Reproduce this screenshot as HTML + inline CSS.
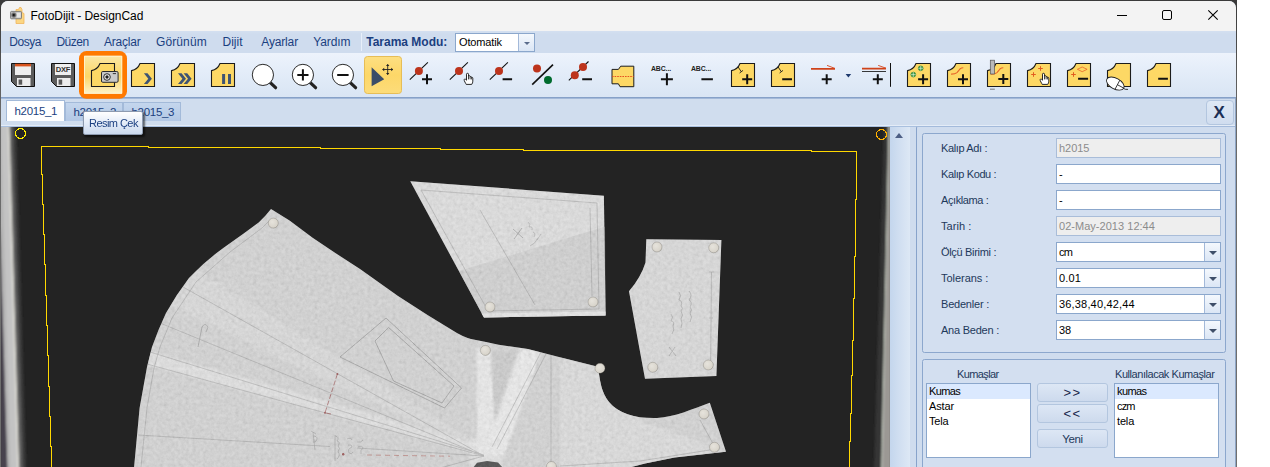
<!DOCTYPE html>
<html lang="tr">
<head>
<meta charset="utf-8">
<title>FotoDijit - DesignCad</title>
<style>
html,body{margin:0;padding:0;}
body{width:1270px;height:467px;overflow:hidden;background:#fff;position:relative;font-family:"Liberation Sans",sans-serif;font-size:12px;color:#1e395b;}
.abs{position:absolute;}
#frame{position:absolute;left:0;top:0;width:1237px;height:480px;background:linear-gradient(#3a3a3a 0,#444 30px,#6a6a6a 110px,#707070 100%);}
#win{position:absolute;left:1px;top:1px;width:1235px;height:480px;background:#cfdcee;border-radius:7px 7px 0 0;overflow:hidden;}
#title{position:absolute;left:0;top:0;width:1235px;height:30px;background:#f3f3f3;}
#title .t{position:absolute;left:29.5px;top:8px;font-size:12px;line-height:15px;color:#000;white-space:pre;letter-spacing:-0.06px;}
#menu{position:absolute;left:0;top:30px;width:1235px;height:22px;background:linear-gradient(#d4e0f0 0,#cfdcee 3px,#cfdcee 100%);}
#menu>span{position:absolute;top:4px;line-height:15px;font-size:12px;white-space:pre;color:#1b3f80;}
#tool{z-index:2;position:absolute;left:0;top:52px;width:1235px;height:45px;background:linear-gradient(#edf3fc 0,#e4edf9 40%,#d9e5f4 100%);border-bottom:1px solid #86a1c8;box-sizing:border-box;}
#tabs{position:absolute;left:0;top:97px;width:1235px;height:29px;background:#d0ddee;box-sizing:border-box;border-bottom:1px solid #a9c0df;border-top:1px solid #a3b9d9;box-shadow:inset 0 -1px 0 #e4ecf7;}
.tab{position:absolute;box-sizing:border-box;border:1px solid #a3bad9;border-bottom:none;font-size:11.5px;letter-spacing:-0.3px;line-height:15px;color:#1b3f80;white-space:pre;}
.tab span{position:absolute;}
#panel{position:absolute;left:915px;top:125px;width:320px;height:360px;background:#cfdcee;border-left:1px solid #88a3cb;border-top:1px solid #a3badb;border-top-left-radius:2px;box-sizing:border-box;}
.gb{position:absolute;box-sizing:border-box;border:1px solid #8ca7cd;border-radius:2.5px;background:#d3dff0;}
.lbl{position:absolute;font-size:11px;line-height:14px;color:#1e395b;white-space:pre;}
.inp{position:absolute;box-sizing:border-box;border:1px solid #8ba7cc;background:#fff;height:20px;font-size:11px;line-height:18px;color:#000;white-space:pre;padding-left:2px;}
.inp.dis{background:#eeeeee;color:#8c8c8c;border-color:#a9bdd9;}
.dd{position:absolute;right:0;top:0;width:15px;height:18px;border-left:1px solid #a3b9d9;background:linear-gradient(#f4f8fd,#dbe6f5);}
.dd:after{content:"";position:absolute;left:3.5px;top:7.5px;border:4px solid transparent;border-top:4.5px solid #3f4f69;border-bottom:none;}
.ddm:after{left:4.5px;top:7.5px;border-width:3.3px;border-top:3.6px solid #5a6c8c;}
.btn{position:absolute;box-sizing:border-box;border:1px solid #b3c6df;border-radius:3px;background:linear-gradient(#dde7f5,#cddaed);font-size:12px;line-height:17px;color:#1e395b;text-align:center;white-space:pre;}
.lb{position:absolute;box-sizing:border-box;border:1px solid #8ba7cc;background:#fff;font-size:11px;color:#000;}
.lb div{height:15px;line-height:15px;padding-left:2px;white-space:pre;}
.lb div.sel{background:#dbe9fe;}
</style>
</head>
<body>
<div id="frame"></div>
<div id="win">
  <div id="title">
    <svg class="abs" style="left:8px;top:5px" width="18" height="20" viewBox="0 0 18 20">
      <path d="M7 3.5 L9.5 3.5 L10.5 1.5 L12 1.5 L13 3.5 L13 6.5 L15 7.5 L15 17.5 L7 17.5 Z" fill="#fbd682" stroke="#f0b45c" stroke-width="0.8"/>
      <rect x="1.5" y="5.4" width="11" height="7.4" rx="1" fill="#b9b9b9" stroke="#6f6f6f" stroke-width="0.8"/>
      <rect x="7.5" y="6.6" width="4.2" height="5" fill="#e6e6e6"/>
      <circle cx="4.8" cy="9.1" r="2.4" fill="#555" stroke="#8c8c8c" stroke-width="0.8"/>
      <circle cx="4.8" cy="9.1" r="1" fill="#111"/>
    </svg>
    <div class="t">FotoDijit - DesignCad</div>
    <svg class="abs" style="left:1110px;top:4px" width="120" height="24" viewBox="0 0 120 24" fill="none" stroke="#000" stroke-width="1">
      <path d="M6 10.5 H16"/>
      <rect x="51.5" y="5.5" width="9" height="9" rx="1.5"/>
      <path d="M97.3 5.3 L106.7 14.7 M106.7 5.3 L97.3 14.7" stroke-width="1.1"/>
    </svg>
  </div>
  <div id="menu">
    <span style="left:8.3px;letter-spacing:-0.5px">Dosya</span>
    <span style="left:55.4px;letter-spacing:-0.5px">Düzen</span>
    <span style="left:103px;letter-spacing:-0.2px">Araçlar</span>
    <span style="left:155px;letter-spacing:0.11px">Görünüm</span>
    <span style="left:221.5px">Dijit</span>
    <span style="left:260.3px;letter-spacing:-0.16px">Ayarlar</span>
    <span style="left:312.3px;letter-spacing:-0.12px">Yardım</span>
    <div class="abs" style="left:360px;top:2px;width:1px;height:18px;background:#e8eff9"></div>
    <span style="left:365.2px;font-weight:bold">Tarama Modu:</span>
    <div class="inp" style="left:454px;top:2px;width:80px;height:19px;line-height:17px;padding-left:3px;border-color:#8ba7cc"><span style="letter-spacing:-0.13px">Otomatik</span><div class="dd ddm" style="height:17px"></div></div>
  </div>
  <div id="tool"><svg class="abs" style="left:0;top:0" width="1235" height="45" viewBox="1 53 1235 45" overflow="visible" font-family="Liberation Sans, sans-serif">
<defs><linearGradient id="hb" x1="0" y1="0" x2="0" y2="1"><stop offset="0" stop-color="#fbe7a6"/><stop offset="0.45" stop-color="#fcd96f"/><stop offset="0.55" stop-color="#fcd668"/><stop offset="1" stop-color="#fdf3cc"/></linearGradient><linearGradient id="ab" x1="0" y1="0" x2="0" y2="1"><stop offset="0" stop-color="#fddf82"/><stop offset="0.5" stop-color="#fdd768"/><stop offset="1" stop-color="#fcdc7a"/></linearGradient></defs>
<rect x="79" y="51" width="48" height="47.8" rx="7.5" fill="#ff7900"/><rect x="84" y="55.8" width="38.2" height="38" rx="1" fill="url(#hb)"/>
<rect x="84.5" y="56.3" width="37.2" height="37" fill="none" stroke="#fff3cf" stroke-width="1" opacity="0.9"/>
<rect x="364.5" y="56.5" width="37" height="37" rx="3" fill="url(#ab)" stroke="#e6bd57" stroke-width="1"/>
<g transform="translate(11,63)"><path d="M0.5,0.5 H23.5 V23.5 H5.5 L0.5,18.5 Z" fill="#5b5b5b" stroke="#111" stroke-width="1"/><rect x="4" y="1" width="16" height="11" fill="#efefef"/><rect x="6" y="15" width="13.5" height="8" fill="#ededed"/><rect x="7.6" y="16.5" width="3.6" height="5.2" fill="#5b5b5b"/><rect x="4" y="0.8" width="16" height="2.6" fill="#d9541e"/></g>
<g transform="translate(51,63)"><path d="M0.5,0.5 H23.5 V23.5 H5.5 L0.5,18.5 Z" fill="#5b5b5b" stroke="#111" stroke-width="1"/><rect x="4" y="1" width="16" height="11" fill="#efefef"/><rect x="6" y="15" width="13.5" height="8" fill="#ededed"/><rect x="7.6" y="16.5" width="3.6" height="5.2" fill="#5b5b5b"/><text x="12" y="9.3" font-size="7.6" font-weight="bold" fill="#333" text-anchor="middle" letter-spacing="-0.2">DXF</text></g>
<g transform="translate(91,63)"><path d="M0.5,23.5 L0.5,7.6 Q6.6,6.6 9,0.5 L23.5,0.5 L23.5,23.5 Z" fill="#fdd865" stroke="#1c1c1c" stroke-width="1.1"/><rect x="10.5" y="8.5" width="16.6" height="10.8" rx="1.3" fill="#c9c9c9" stroke="#2a2a2a" stroke-width="1"/><circle cx="16" cy="14" r="3.3" fill="#f6f6f6" stroke="#2c2c2c" stroke-width="1"/><circle cx="16" cy="14" r="1.7" fill="#222"/><path d="M21.8,10.6 H25" stroke="#222" stroke-width="0.9"/></g>
<g transform="translate(131,63)"><path d="M0.5,23.5 L0.5,7.6 Q6.6,6.6 9,0.5 L23.5,0.5 L23.5,23.5 Z" fill="#fdd865" stroke="#1c1c1c" stroke-width="1.1" stroke-linejoin="miter"/><path d="M12.9,10.3 H16.5 L20.9,15.7 L16.5,21 H12.9 L17.3,15.7 Z" fill="#3f5473"/></g>
<g transform="translate(171,63)"><path d="M0.5,23.5 L0.5,7.6 Q6.6,6.6 9,0.5 L23.5,0.5 L23.5,23.5 Z" fill="#fdd865" stroke="#1c1c1c" stroke-width="1.1" stroke-linejoin="miter"/><path d="M7,10.3 H10.6 L15,15.7 L10.6,21 H7 L11.4,15.7 Z" fill="#3f5473"/><path d="M12.6,10.3 H16.2 L20.6,15.7 L16.2,21 H12.6 L17.0,15.7 Z" fill="#3f5473"/></g>
<g transform="translate(211,63)"><path d="M0.5,23.5 L0.5,7.6 Q6.6,6.6 9,0.5 L23.5,0.5 L23.5,23.5 Z" fill="#fdd865" stroke="#1c1c1c" stroke-width="1.1" stroke-linejoin="miter"/><rect x="11.1" y="11" width="3" height="10" fill="#3f5473"/><rect x="17" y="11" width="3" height="10" fill="#3f5473"/></g>
<g transform="translate(251,63)"><path d="M19,19.4 L24.6,24.7" stroke="#222" stroke-width="3.2" stroke-linecap="round"/><circle cx="11.9" cy="11.9" r="10.6" fill="#fff" stroke="#2a2a2a" stroke-width="1"/></g>
<g transform="translate(291,63)"><path d="M19,19.4 L24.6,24.7" stroke="#222" stroke-width="3.2" stroke-linecap="round"/><circle cx="11.9" cy="11.9" r="10.6" fill="#fff" stroke="#2a2a2a" stroke-width="1"/><path d="M6.300000000000001,11.9 H17.5 M11.9,6.300000000000001 V17.5" stroke="#111" stroke-width="2" fill="none"/></g>
<g transform="translate(331,63)"><path d="M19,19.4 L24.6,24.7" stroke="#222" stroke-width="3.2" stroke-linecap="round"/><circle cx="11.9" cy="11.9" r="10.6" fill="#fff" stroke="#2a2a2a" stroke-width="1"/><path d="M6.2,11.9 H17.6" stroke="#111" stroke-width="2" fill="none"/></g>
<g transform="translate(371,63)"><path d="M0.6,4.3 L0.6,23.2 L13.2,16.3 Z" fill="#3b4d68"/><path d="M11.7,6.5 H21.7 M16.7,1.5 V11.5" stroke="#222" stroke-width="0.9" fill="none"/><path d="M11.2,6.5 l2,-1.7 v3.4z M22.2,6.5 l-2,-1.7 v3.4z M16.7,1 l-1.7,2 h3.4z M16.7,12 l-1.7,-2 h3.4z" fill="#222"/></g>
<g transform="translate(411,63)"><path d="M-1.2,16.6 L16.9,-0.7" stroke="#111" stroke-width="1.1"/><circle cx="7.9" cy="8" r="4" fill="#bd341c"/><path d="M11,16.3 H21 M16,11.3 V21.3" stroke="#111" stroke-width="2" fill="none"/></g>
<g transform="translate(451,63)"><path d="M-1.2,16.6 L16.9,-0.7" stroke="#111" stroke-width="1.1"/><circle cx="8" cy="8" r="4" fill="#bd341c"/><g transform="translate(12.9,10) scale(1.0)"><path d="M2.6,7.2 V1.2 Q2.6,0.3 3.6,0.3 Q4.6,0.3 4.6,1.2 V3.4 Q4.7,2.7 5.4,2.7 Q6.2,2.7 6.2,3.5 V4.2 Q6.3,3.6 7,3.6 Q7.7,3.6 7.7,4.4 V5 Q7.8,4.5 8.3,4.5 Q8.9,4.5 8.9,5.3 V8.2 Q8.9,10 7.8,11.4 H2.3 Q1.8,10.4 1,9 L0.4,7.6 Q0,6.5 0.6,6.1 Q1.3,5.7 1.9,6.6 Z" fill="#fff" stroke="#111" stroke-width="0.9" stroke-linejoin="round"/><path d="M4.6,3.4 V6.4 M6.2,4.2 V6.4 M7.7,5 V6.4" stroke="#111" stroke-width="0.8" fill="none"/></g></g>
<g transform="translate(491,63)"><path d="M-1.2,16.6 L16.9,-0.7" stroke="#111" stroke-width="1.1"/><circle cx="8" cy="8" r="4" fill="#bd341c"/><path d="M11.6,16.3 H21.1" stroke="#111" stroke-width="2" fill="none"/></g>
<g transform="translate(531,63)"><path d="M1.2,21.7 L22,1.7" stroke="#111" stroke-width="1.6"/><circle cx="6" cy="5.6" r="4" fill="#bd341c"/><circle cx="17" cy="16.9" r="4" fill="#006b2d"/></g>
<g transform="translate(571,63)"><path d="M-2.2,17.4 L17.5,-1.5" stroke="#111" stroke-width="1.1"/><circle cx="3.8" cy="12.2" r="4" fill="#bd341c"/><circle cx="12" cy="4" r="4" fill="#bd341c"/><path d="M11.2,16.3 H21" stroke="#111" stroke-width="2" fill="none"/></g>
<g transform="translate(611,63)"><path d="M1,6.4 H7.4 L9.7,3.2 H22.8 V23.7 H9 L7.4,20.8 H1 Z" fill="#fdd865" stroke="#1c1c1c" stroke-width="1"/><path d="M1,13.5 H22.8" stroke="#e0431a" stroke-width="0.9" stroke-dasharray="1.6 1"/></g>
<g transform="translate(651,63)"><text x="0" y="8" font-size="6.8" font-weight="bold" fill="#222" letter-spacing="-0.1" textLength="20" lengthAdjust="spacingAndGlyphs">ABC...</text><path d="M9.9,16.3 H21.9 M15.9,10.3 V22.3" stroke="#111" stroke-width="2" fill="none"/></g>
<g transform="translate(691,63)"><text x="0" y="8" font-size="6.8" font-weight="bold" fill="#222" letter-spacing="-0.1" textLength="20" lengthAdjust="spacingAndGlyphs">ABC...</text><path d="M10.4,16.2 H21.9" stroke="#111" stroke-width="2" fill="none"/></g>
<g transform="translate(731,63)"><path d="M0.5,23.5 L0.5,7.6 Q6.6,6.6 9,0.5 L23.5,0.5 L23.5,23.5 Z" fill="#fdd865" stroke="#1c1c1c" stroke-width="1.1" stroke-linejoin="miter"/><path d="M7,3.8 L10.2,8.6 M8.6,10 L12,7.4" stroke="#1c1c1c" stroke-width="0.9" fill="none"/><path d="M11.2,16.3 H21.2 M16.2,11.3 V21.3" stroke="#111" stroke-width="2" fill="none"/></g>
<g transform="translate(771,63)"><path d="M0.5,23.5 L0.5,7.6 Q6.6,6.6 9,0.5 L23.5,0.5 L23.5,23.5 Z" fill="#fdd865" stroke="#1c1c1c" stroke-width="1.1" stroke-linejoin="miter"/><path d="M7,3.8 L10.2,8.6 M8.6,10 L12,7.4" stroke="#1c1c1c" stroke-width="0.9" fill="none"/><path d="M11.2,16.2 H21" stroke="#111" stroke-width="2" fill="none"/></g>
<g transform="translate(811,63)"><path d="M0,5.9 H24" stroke="#cf431a" stroke-width="1.7"/><path d="M16,2.4 L24,5.4" stroke="#d9441a" stroke-width="0.9"/><path d="M10.7,16.3 H20.7 M15.7,11.3 V21.3" stroke="#111" stroke-width="2" fill="none"/></g>
<path d="M845.6,74 h5.6 l-2.8,3.4z" fill="#1e3a6e"/>
<g transform="translate(862,63)"><path d="M0,5.6 H24" stroke="#cf431a" stroke-width="1.7"/><path d="M0,8.5 H24" stroke="#222" stroke-width="0.9"/><path d="M16.2,2.4 L24,5.2" stroke="#d9441a" stroke-width="0.9"/><path d="M10.8,16.3 H20.8 M15.8,11.3 V21.3" stroke="#111" stroke-width="2" fill="none"/></g>
<path d="M890.5,63 V86.8" stroke="#111" stroke-width="1"/>
<g transform="translate(907,63)"><path d="M0.5,23.5 L0.5,7.6 Q6.6,6.6 9,0.5 L23.5,0.5 L23.5,23.5 Z" fill="#fdd865" stroke="#1c1c1c" stroke-width="1.1" stroke-linejoin="miter"/><circle cx="6.3" cy="11.6" r="2.4" fill="#3c9a4b" stroke="#1f7a30" stroke-width="0.6"/><path d="M3.9,11.6 h4.8 M6.3,9.2 v4.8" stroke="#e9f6e0" stroke-width="0.6"/><circle cx="13.7" cy="5.3" r="2.4" fill="#3c9a4b" stroke="#1f7a30" stroke-width="0.6"/><path d="M11.299999999999999,5.3 h4.8 M13.7,2.9 v4.8" stroke="#e9f6e0" stroke-width="0.6"/><path d="M11.100000000000001,16.3 H21.1 M16.1,11.3 V21.3" stroke="#111" stroke-width="2" fill="none"/></g>
<g transform="translate(947,63)"><path d="M0.5,23.5 L0.5,7.6 Q6.6,6.6 9,0.5 L23.5,0.5 L23.5,23.5 Z" fill="#fdd865" stroke="#1c1c1c" stroke-width="1.1" stroke-linejoin="miter"/><path d="M4.1,11.1 Q8,11.2 10,9.6 L13.1,5.8 Q14.4,4.8 16.3,4.8" stroke="#e8642a" stroke-width="1.1" fill="none"/><path d="M11,16.3 H21 M16,11.3 V21.3" stroke="#111" stroke-width="2" fill="none"/></g>
<g transform="translate(987,63)"><path d="M0.5,23.5 L0.5,7.6 Q6.6,6.6 9,0.5 L23.5,0.5 L23.5,23.5 Z" fill="#fdd865" stroke="#1c1c1c" stroke-width="1.1" stroke-linejoin="miter"/><path d="M4.1,11.1 Q8,11.2 10,9.6 L13.1,5.8 Q14.4,4.8 16.3,4.8" stroke="#e8642a" stroke-width="1.1" fill="none"/><path d="M11.3,16.1 H21.3 M16.3,11.100000000000001 V21.1" stroke="#111" stroke-width="2" fill="none"/><rect x="3.3" y="-2.8" width="4.2" height="13.8" fill="#b9b9b9" stroke="#555" stroke-width="0.7"/><path d="M3,26.2 H7.8" stroke="#777" stroke-width="1"/></g>
<g transform="translate(1027,63)"><path d="M0.5,23.5 L0.5,7.6 Q6.6,6.6 9,0.5 L23.5,0.5 L23.5,23.5 Z" fill="#fdd865" stroke="#1c1c1c" stroke-width="1.1" stroke-linejoin="miter"/><path d="M4.2,11.5 h4.6 M6.5,9.2 v4.6" stroke="#e25c20" stroke-width="1" fill="none"/><path d="M11.2,5.5 h4.6 M13.5,3.2 v4.6" stroke="#e25c20" stroke-width="1" fill="none"/><g transform="translate(12.9,10) scale(1.0)"><path d="M2.6,7.2 V1.2 Q2.6,0.3 3.6,0.3 Q4.6,0.3 4.6,1.2 V3.4 Q4.7,2.7 5.4,2.7 Q6.2,2.7 6.2,3.5 V4.2 Q6.3,3.6 7,3.6 Q7.7,3.6 7.7,4.4 V5 Q7.8,4.5 8.3,4.5 Q8.9,4.5 8.9,5.3 V8.2 Q8.9,10 7.8,11.4 H2.3 Q1.8,10.4 1,9 L0.4,7.6 Q0,6.5 0.6,6.1 Q1.3,5.7 1.9,6.6 Z" fill="#fff" stroke="#111" stroke-width="0.9" stroke-linejoin="round"/><path d="M4.6,3.4 V6.4 M6.2,4.2 V6.4 M7.7,5 V6.4" stroke="#111" stroke-width="0.8" fill="none"/></g></g>
<g transform="translate(1067,63)"><path d="M0.5,23.5 L0.5,7.6 Q6.6,6.6 9,0.5 L23.5,0.5 L23.5,23.5 Z" fill="#fdd865" stroke="#1c1c1c" stroke-width="1.1" stroke-linejoin="miter"/><path d="M4.2,11.5 h4.6 M6.5,9.2 v4.6" stroke="#e25c20" stroke-width="1" fill="none"/><path d="M10.4,6.3 L15.2,4 L20.1,6.3 L15.2,8.7 Z" stroke="#e8642a" stroke-width="0.8" fill="none"/><path d="M11.1,15.8 H21.1" stroke="#111" stroke-width="2" fill="none"/></g>
<g transform="translate(1107,63)"><path d="M0.5,23.5 L0.5,7.6 Q6.6,6.6 9,0.5 L23.5,0.5 L23.5,23.5 Z" fill="#fdd865" stroke="#1c1c1c" stroke-width="1.1" stroke-linejoin="miter"/><g transform="translate(8.3,20.6) rotate(28)"><ellipse cx="0" cy="0" rx="9.6" ry="5.4" fill="#fff" stroke="#222" stroke-width="0.9"/><path d="M2.4,-5.2 V5.2 M2.4,0 H9.6" stroke="#222" stroke-width="0.8" fill="none"/></g><path d="M16.2,25.2 Q18,26.8 21,26.4" stroke="#222" stroke-width="0.9" fill="none"/></g>
<g transform="translate(1147,63)"><path d="M0.5,23.5 L0.5,7.6 Q6.6,6.6 9,0.5 L23.5,0.5 L23.5,23.5 Z" fill="#fdd865" stroke="#1c1c1c" stroke-width="1.1" stroke-linejoin="miter"/><path d="M11.2,15.8 H20.9" stroke="#111" stroke-width="2" fill="none"/></g>
</svg></div>
  <div id="tabs">
    <div class="tab" style="left:5px;top:1px;width:59px;height:21px;background:#fff;"><span style="left:7.5px;top:3px">h2015_1</span></div>
    <div class="tab" style="left:64px;top:3px;width:58px;height:19px;background:linear-gradient(#c4d6ed,#b3c8e5);"><span style="left:7.5px;top:2px">h2015_2</span></div>
    <div class="tab" style="left:122px;top:3px;width:58px;height:19px;background:linear-gradient(#c4d6ed,#b3c8e5);"><span style="left:7.5px;top:2px">h2015_3</span></div>
    <div class="abs" style="left:1205px;top:1px;width:28px;height:25px;box-sizing:border-box;border:1px solid #b3c6df;border-radius:4px;background:linear-gradient(#dee8f5,#d0ddef);"><span class="abs" style="left:6.5px;top:1.5px;font-size:17px;line-height:20px;font-weight:bold;color:#1c2f55;">X</span></div>
  </div>
  <svg class="abs" style="left:0;top:126px" width="889" height="341" viewBox="1 127 889 341">
    <defs>
      <filter id="b07" x="-30%" y="-5%" width="160%" height="110%"><feGaussianBlur stdDeviation="0.8 0.2"/></filter>
      <filter id="b03"><feGaussianBlur stdDeviation="0.35"/></filter>
      <filter id="b05"><feGaussianBlur stdDeviation="0.55"/></filter>
      <filter id="b1"><feGaussianBlur stdDeviation="1.2"/></filter>
      <filter id="nz" x="0" y="0" width="100%" height="100%"><feTurbulence type="fractalNoise" baseFrequency="0.28" numOctaves="3" seed="7"/><feColorMatrix type="matrix" values="0.5 0.5 0 0 0.3  0.5 0.5 0 0 0.3  0.5 0.5 0 0 0.3  0 0 0 0 0.3"/></filter>
      <radialGradient id="pin" cx="0.4" cy="0.38" r="0.8"><stop offset="0" stop-color="#e6e3dc"/><stop offset="0.7" stop-color="#d8d4cb"/><stop offset="1" stop-color="#a09a8f"/></radialGradient>
      <linearGradient id="rstrip" x1="0" y1="0" x2="1" y2="0"><stop offset="0" stop-color="#2a2a2a"/><stop offset="0.35" stop-color="#6c6c6c"/><stop offset="0.8" stop-color="#8a8a8a"/><stop offset="1" stop-color="#a2a2a2"/></linearGradient>
      <path id="p1" d="M134,468 L139.6,408 L147,367 L152,347 L158.5,330 L166,313 Q176,295 189,278 Q205,261 224,247.4 L243,234 L258.7,222.4 Q266,215.5 271,208.9 L289.5,220.4 L312.6,237.8 L335.7,253.2 L360,269 L398,296 L427.5,315 L452,330 Q462,336.5 471,339 L486,342 L498.7,344.7 L528,349 L557,356.4 L598,366.7 C600,381 601,392 609,402 C619,414 636,418.5 657,418 C675,417 692,409 709.8,402.7 L726,451.7 L674.6,457.6 L645,463.4 L627.7,468 Z"/>
      <path id="p2" d="M410.3,181.3 L603.9,195.7 L605.6,315.6 L484,317.4 Z"/>
      <path id="p3" d="M646.3,239.3 L721.4,240 L716.4,376 L645,378.8 L638.5,343.4 L629,291.3 Q641,277 645.5,262.4 Z"/>
      <clipPath id="cp1"><use href="#p1"/></clipPath>
      <clipPath id="cpAll"><use href="#p1"/><use href="#p2"/><use href="#p3"/></clipPath>
    </defs>
    <rect x="1" y="127" width="889" height="341" fill="#232323"/>
    <!-- left wall strip -->
    <g filter="url(#b07)">
      <polygon points="9.8,127 13,127 23,468 19.4,468" fill="#626262"/>
      <polygon points="12.6,127 16,127 26,468 22.6,468" fill="#3b3b3b"/>
      <polygon points="-4,127 8.6,127 18.2,468 7.2,468" fill="#c3c3c3"/>
      <polygon points="-4,127 1,127 10.4,468 7.2,468" fill="#b4b4b4"/>
      <polygon points="7.4,127 9.6,127 19.2,468 17,468" fill="#d9d8d2"/>
      <polygon points="0,225 0,468 7.4,468" fill="#47424e"/>
    </g>
    <!-- right edge strip -->
    <g filter="url(#b07)">
      <polygon points="884,127 889,127 882,468 874,468" fill="#363636"/>
      <polygon points="888.8,127 891,127 891,468 881.6,468" fill="#9b9894"/>
      <polygon points="888.4,127 889.2,127 882.4,468 881.2,468" fill="#c4cbc0"/>
    </g>
    <!-- paper pieces -->
    <g filter="url(#b05)">
      <use href="#p2" fill="#d3d3d3"/>
      <polygon points="459,271 605,226.5 605.6,315.6 484,317.4" fill="#b0b0b0" opacity="0.42"/>
      <polygon points="484,317.4 605.6,315.6 605.4,311.4 481.5,313.4" fill="#dcdcdc"/>
      <use href="#p3" fill="#cecece"/>
      <use href="#p1" fill="#c7c7c7"/>
    </g>
    <g clip-path="url(#cp1)">
      <g filter="url(#b1)">
        <polygon points="150,351 147,365 484,456 484,446" fill="#dddddd" opacity="0.7"/>
        <polygon points="196,270 170,305 484,456 486,449" fill="#d6d6d6" opacity="0.45"/>
        <polygon points="477,347 490,349 497,456 477,456" fill="#e6e6e6" opacity="0.85"/>
        <polygon points="520,348.5 541,352 504,456 484,456" fill="#e8e8e8" opacity="0.85"/><polygon points="492,352 518,350 494,420" fill="#b4b4b4" opacity="0.5"/>
        <polygon points="470,438 502,438 502,468 470,468" fill="#e0e0e0" opacity="0.6"/>
        <polygon points="560,357 600,367 640,420 726,452 640,468 560,468" fill="#d8d8d8" opacity="0.55"/>
      </g>
      <g fill="none" stroke="#4a4a4a" stroke-width="0.7" opacity="0.45">
        <path d="M147,364 L290,403.3 L484,456"/>
        <path d="M138,435 L330,446.5 M357,448 L484,456"/>
        <path d="M160,323 L484,456"/>
        <path d="M167,278 L484,456"/>
        <path d="M150,352 L484,455"/>
        <path d="M141,467 L147,408 L154,368 L160,347 L172,318 L196,282 L230,252 L262,228 L270,220"/>
        <path d="M541,352 L492,447"/>
        <path d="M546,354 L497,449"/>
        <path d="M551,355 L551,466"/>
        <path d="M700,420 L716,449 L640,461 L560,466"/>
        <path d="M484,456 L440,468"/>
        <path d="M198,347 l4,-20 q3,-5 6,0 l-2,5" stroke-width="0.9"/>
        <path d="M311,431 l5,3 M313,432 l2,18 M314,436 q5,1 2,5 q-2,2 -3,1" stroke-width="0.8"/>
        <path d="M335,435 v26 M335,436 q5,1 2,5 q4,1 1,5 q3,2 0,6 q3,3 -1,7 M347,439 q4,-2 5,1 M348,445 q4,-1 4,2 q-5,2 -3,6 q3,2 4,-1 M357,442 q4,1 6,-2 M358,447 q4,-2 5,1 q-3,2 -2,6" stroke-width="0.8"/>
      </g>
      <g fill="none" stroke="#3c3c3c" stroke-width="0.7" opacity="0.6">
        <path d="M340,357 L386,318 L461.5,388 L444.5,408 Z"/>
        <path d="M375,341 L388.6,327.5 L454,386 L442,403 L393.5,381 Z"/>
      </g>
      <path d="M337.4,374 L325,412.8 L331,414" fill="none" stroke="#7d2626" stroke-width="0.9" stroke-dasharray="5 2" opacity="0.8"/>
      <circle cx="337.4" cy="374" r="1" fill="#7d2626"/><circle cx="325" cy="412.8" r="1" fill="#7d2626"/>
      <path d="M367,455 L450,456.2" fill="none" stroke="#a0463e" stroke-width="0.9" stroke-dasharray="5 4" opacity="0.7"/><circle cx="343.2" cy="454.2" r="1.2" fill="#7d2626"/>
      <path d="M473,468 L477,462.8 L487,461 L498,462.4 L503,468 Z" fill="#1d1d1d" filter="url(#b05)"/>
    </g>
    <g fill="none" stroke="#4a4a4a" stroke-width="0.7" opacity="0.45">
      <path d="M421,190 L597,203 L599,309 L488,311 Z"/>
      <path d="M480,210 L535,305"/>
      <path d="M590,208 L592,296"/>
      <path d="M711.5,272 L710.6,364 M709,272 h5 M709,318 h4 M708.5,364 h5"/><path d="M671,314 q3,3 0,7 q4,0 2,5 q2,4 -1,8 M679,292 q3,3 0,8 q4,1 2,6 q3,2 0,5 q3,4 0,8 q2,4 0,9 M689,291 q4,4 0,9 q4,2 1,7 q3,3 0,6 q3,4 0,9 M669,347 l7,9 m-7,0 l6,-9" stroke-width="0.8"/>
      <path d="M513,229 l10,9 m-1,-10 l-8,11" stroke-width="1"/><path d="M528,222 q3,2 1,5 q4,-1 3,3 M533,232 q3,1 1,5 M537,240 l4,-6 M530,246 q5,-2 8,-8" stroke-width="0.7"/>
    </g>
    <rect x="130" y="175" width="600" height="295" filter="url(#nz)" clip-path="url(#cpAll)"/>
    <!-- pins -->
    <g fill="url(#pin)" stroke="#5f5b55" stroke-width="0.3" filter="url(#b03)">
      <circle cx="273.3" cy="223.1" r="5"/><circle cx="490" cy="307" r="5"/><circle cx="593" cy="302" r="5"/>
      <circle cx="485.4" cy="350.4" r="5"/><circle cx="600" cy="368.3" r="5"/><circle cx="657" cy="247" r="5"/>
      <circle cx="713.7" cy="247.8" r="5"/><circle cx="652.8" cy="367.3" r="5"/><circle cx="708.3" cy="365" r="5"/>
      <circle cx="704" cy="414" r="5"/><circle cx="714.5" cy="447.3" r="5"/><circle cx="551.4" cy="466.5" r="5"/>
    </g>
    <!-- digitizing frame -->
    <g fill="none" stroke="#ffd800" stroke-width="1" shape-rendering="crispEdges">
      <path d="M41.5,146 V174.0 H42.5 V204.3 H43.5 V234.6 H44.5 V264.9 H45.5 V295.2 H46.5 V325.5 H47.5 V355.8 H48.5 V386.1 H49.5 V416.4 H50.5 V446.7 H51.5 V468"/><path d="M41,146.5 H148.5 V147.5 H320 V148.5 H440.4 V149.5 H523.6 V150.5 H811 V151.5 H857"/><path d="M856.5,151 V199 H855.5 V256 H854.5 V298 H853.5 V340 H852.5 V375 H851.5 V413 H850.5 V441 H849.5 V468"/>
    </g>
    <circle cx="20.5" cy="133.5" r="5" fill="none" stroke="#ffee00" stroke-width="1" shape-rendering="crispEdges"/>
    <circle cx="881.5" cy="134.5" r="5" fill="none" stroke="#ffb000" stroke-width="1" shape-rendering="crispEdges"/>
  </svg>

  <div id="scroll" class="abs" style="left:889px;top:126px;width:20px;height:360px;background:linear-gradient(90deg,#c4d6ed,#d1dff1 50%,#dde8f5);">
    <div class="abs" style="left:4.8px;top:6px;border:4.7px solid transparent;border-bottom:5px solid #4d5f85;border-top:none;"></div>
  </div>
  <div id="panel">
    <div class="gb" style="left:5px;top:6px;width:304px;height:220px"></div>
    <div class="lbl" style="left:24px;top:14px"><span style="letter-spacing:-0.36px">Kalıp Adı :</span></div>
    <div class="lbl" style="left:24px;top:40px"><span style="letter-spacing:-0.4px">Kalıp Kodu :</span></div>
    <div class="lbl" style="left:24px;top:66px"><span style="letter-spacing:-0.4px">Açıklama :</span></div>
    <div class="lbl" style="left:24px;top:92px"><span style="letter-spacing:0.06px">Tarih :</span></div>
    <div class="lbl" style="left:24px;top:118px"><span style="letter-spacing:-0.32px">Ölçü Birimi :</span></div>
    <div class="lbl" style="left:24px;top:144px"><span style="letter-spacing:-0.03px">Tolerans :</span></div>
    <div class="lbl" style="left:24px;top:170px"><span style="letter-spacing:-0.21px">Bedenler :</span></div>
    <div class="lbl" style="left:24px;top:196px"><span style="letter-spacing:-0.23px">Ana Beden :</span></div>
    <div class="inp dis" style="left:139px;top:11px;width:165px"><span style="letter-spacing:-0.04px">h2015</span></div>
    <div class="inp" style="left:139px;top:37px;width:165px"><span style="letter-spacing:-0.17px">-</span></div>
    <div class="inp" style="left:139px;top:63px;width:165px"><span style="letter-spacing:-0.17px">-</span></div>
    <div class="inp dis" style="left:139px;top:89px;width:165px"><span style="letter-spacing:0.03px">02-May-2013 12:44</span></div>
    <div class="inp" style="left:139px;top:115px;width:165px"><span style="letter-spacing:-0.7px">cm</span><div class="dd"></div></div>
    <div class="inp" style="left:139px;top:141px;width:165px"><span style="letter-spacing:0.14px">0.01</span><div class="dd"></div></div>
    <div class="inp" style="left:139px;top:167px;width:165px"><span style="letter-spacing:0.17px">36,38,40,42,44</span><div class="dd"></div></div>
    <div class="inp" style="left:139px;top:193px;width:165px"><span style="letter-spacing:-0.22px">38</span><div class="dd"></div></div>
    <div class="gb" style="left:5px;top:232px;width:304px;height:130px"></div>
    <div class="lbl" style="left:40px;top:240px"><span style="letter-spacing:-0.6px">Kumaşlar</span></div>
    <div class="lbl" style="left:198px;top:240px"><span style="letter-spacing:-0.45px">Kullanılacak Kumaşlar</span></div>
    <div class="lb" style="left:9px;top:256px;width:105px;height:75px"><div class="sel"><span style="letter-spacing:-0.65px">Kumas</span></div><div><span style="letter-spacing:-0.14px">Astar</span></div><div><span style="letter-spacing:-0.15px">Tela</span></div></div>
    <div class="btn" style="left:120px;top:256px;width:71px;height:19px;letter-spacing:1.4px;font-size:13px;line-height:18.5px;color:#16244a">&gt;&gt;</div>
    <div class="btn" style="left:120px;top:277px;width:71px;height:19px;letter-spacing:1.4px;font-size:13px;line-height:18.5px;color:#16244a">&lt;&lt;</div>
    <div class="btn" style="left:120px;top:302px;width:71px;height:19px;font-size:11.5px;line-height:18.5px;letter-spacing:-0.4px">Yeni</div>
    <div class="lb" style="left:197px;top:256px;width:105px;height:75px"><div class="sel"><span style="letter-spacing:-0.6px">kumas</span></div><div><span style="letter-spacing:-0.82px">czm</span></div><div><span style="letter-spacing:-0.16px">tela</span></div></div>
  </div>
  <div id="tip" class="abs" style="z-index:5;left:82px;top:110px;width:60px;height:24px;box-sizing:border-box;border:1px solid #8e9bb0;border-radius:2px;background:linear-gradient(#ffffff,#e4ecf8 50%,#ccdaee);box-shadow:1.5px 1.5px 2px rgba(0,0,0,0.55);"><span class="abs" style="left:5px;top:4px;font-size:11px;line-height:14px;letter-spacing:-0.55px;color:#1b3f80;white-space:pre">Resim Çek</span></div>
  <div class="abs" style="left:1234px;top:97px;width:1px;height:400px;background:#8fa6c6"></div>
</div>
</body>
</html>
